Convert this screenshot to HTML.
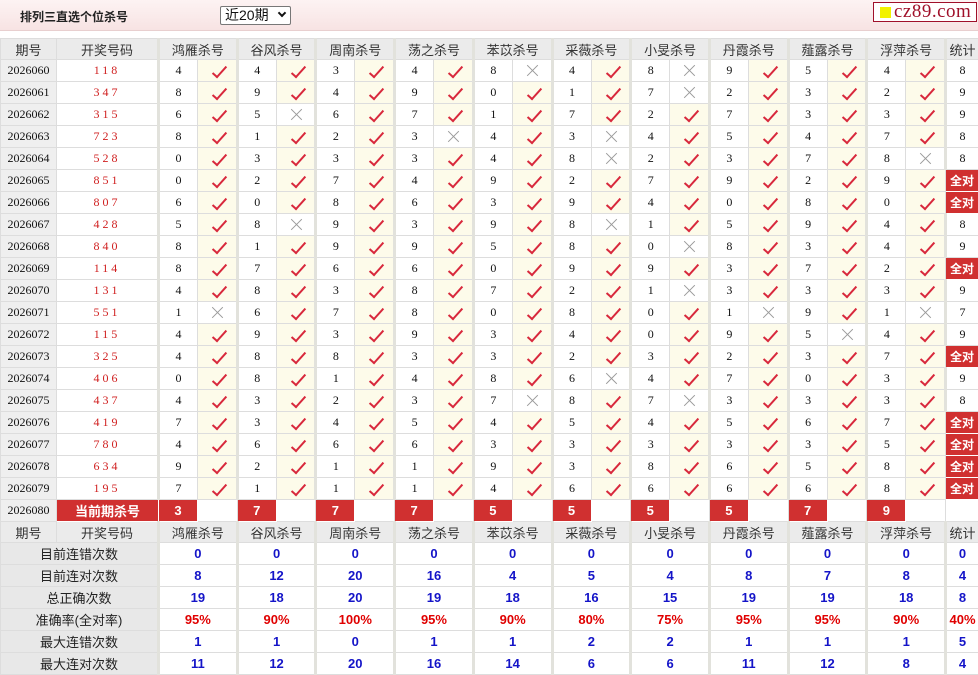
<!DOCTYPE html>
<html><head><meta charset="utf-8"><style>
*{box-sizing:border-box}
body{margin:0;width:978px;height:674px;background:#fff;position:relative;overflow:hidden;font-family:"Liberation Sans","Noto Sans CJK SC",sans-serif}
.bar{position:absolute;left:0;top:0;width:978px;height:31px;background:linear-gradient(#fdf3f3,#f7e3e3);border-bottom:1px solid #e8cfcf}
.title{position:absolute;left:20px;top:8px;font-size:12px;font-weight:bold;color:#222}
.sel{position:absolute;left:220px;top:6px;width:71px;height:19px;border:1px solid #777;border-radius:2px;background:#fff;font-size:14px;line-height:17px;padding-left:4px;color:#111}
.sel b{position:absolute;right:5px;top:3px;width:6px;height:6px;border-right:2px solid #111;border-bottom:2px solid #111;transform:rotate(45deg)}
.logo{position:absolute;left:873px;top:2px;width:104px;height:20px;border:1px solid #a0102a;background:#fff;font-family:"Liberation Serif",serif;font-size:19px;line-height:17px;color:#a0102a;padding-left:20px;letter-spacing:.5px}
.logo i{position:absolute;left:6px;top:4px;width:11px;height:11px;background:#f2f200}
table{position:absolute;left:0;top:38px;width:978px;border-collapse:collapse;table-layout:fixed}
td{border:1px solid #ddd;height:22px;padding:0;text-align:center;font:12px "Liberation Serif","Noto Serif CJK SC",serif;color:#111;position:relative}
tr.h td{background:#ebebeb;font:13px "Liberation Sans","Noto Sans CJK SC",sans-serif;color:#333;height:21px}
td.q{background:#efefef}
td.k{color:#d02020;letter-spacing:3px}
td.n{border-left:3px solid #e2e2dc}
td.v{background:#fdfbea}
td.v:after{content:"";position:absolute;left:18px;top:3px;width:5px;height:13px;border-right:2px solid #d8283c;border-bottom:2px solid #d8283c;transform:rotate(42deg)}
td.x:before,td.x:after{content:"";position:absolute;left:12px;top:10px;width:15px;height:1px;background:#999;transform:rotate(45deg)}
td.x:after{transform:rotate(-45deg)}
td.a{background:#d03030;color:#fff;font:bold 12px "Liberation Sans","Noto Sans CJK SC",sans-serif;border:1px solid #fff}
td.r{background:#d03030;color:#fff;font:bold 13px "Liberation Sans","Noto Sans CJK SC",sans-serif;border:1px solid #fff}
tr.s td{font:bold 13px "Liberation Sans",sans-serif;color:#1414c8}
tr.s td.l{background:#e8e8e8;font:13px "Liberation Sans","Noto Sans CJK SC",sans-serif;color:#222;font-weight:normal}
tr.p td{color:#e00000}
</style></head><body>
<div class="bar"><div class="title">排列三直选个位杀号</div><div class="sel">近20期<b></b></div><div class="logo"><i></i>cz89.com</div></div>
<table>
<colgroup><col style="width:56px"><col style="width:102px">
<col style="width:39px"><col style="width:39.7px"><col style="width:39px"><col style="width:39.7px"><col style="width:39px"><col style="width:39.7px"><col style="width:39px"><col style="width:39.7px"><col style="width:39px"><col style="width:39.7px"><col style="width:39px"><col style="width:39.7px"><col style="width:39px"><col style="width:39.7px"><col style="width:39px"><col style="width:39.7px"><col style="width:39px"><col style="width:39.7px"><col style="width:39px"><col style="width:39.7px">
<col style="width:33px"></colgroup>
<tr class="h"><td>期号</td><td>开奖号码</td><td colspan="2" class="n">鸿雁杀号</td><td colspan="2" class="n">谷风杀号</td><td colspan="2" class="n">周南杀号</td><td colspan="2" class="n">荡之杀号</td><td colspan="2" class="n">苯苡杀号</td><td colspan="2" class="n">采薇杀号</td><td colspan="2" class="n">小旻杀号</td><td colspan="2" class="n">丹霞杀号</td><td colspan="2" class="n">薤露杀号</td><td colspan="2" class="n">浮萍杀号</td><td class="n">统计</td></tr>
<tr><td class="q">2026060</td><td class="k">118</td><td class="n">4</td><td class="v"></td><td class="n">4</td><td class="v"></td><td class="n">3</td><td class="v"></td><td class="n">4</td><td class="v"></td><td class="n">8</td><td class="x"></td><td class="n">4</td><td class="v"></td><td class="n">8</td><td class="x"></td><td class="n">9</td><td class="v"></td><td class="n">5</td><td class="v"></td><td class="n">4</td><td class="v"></td><td class="n">8</td></tr>
<tr><td class="q">2026061</td><td class="k">347</td><td class="n">8</td><td class="v"></td><td class="n">9</td><td class="v"></td><td class="n">4</td><td class="v"></td><td class="n">9</td><td class="v"></td><td class="n">0</td><td class="v"></td><td class="n">1</td><td class="v"></td><td class="n">7</td><td class="x"></td><td class="n">2</td><td class="v"></td><td class="n">3</td><td class="v"></td><td class="n">2</td><td class="v"></td><td class="n">9</td></tr>
<tr><td class="q">2026062</td><td class="k">315</td><td class="n">6</td><td class="v"></td><td class="n">5</td><td class="x"></td><td class="n">6</td><td class="v"></td><td class="n">7</td><td class="v"></td><td class="n">1</td><td class="v"></td><td class="n">7</td><td class="v"></td><td class="n">2</td><td class="v"></td><td class="n">7</td><td class="v"></td><td class="n">3</td><td class="v"></td><td class="n">3</td><td class="v"></td><td class="n">9</td></tr>
<tr><td class="q">2026063</td><td class="k">723</td><td class="n">8</td><td class="v"></td><td class="n">1</td><td class="v"></td><td class="n">2</td><td class="v"></td><td class="n">3</td><td class="x"></td><td class="n">4</td><td class="v"></td><td class="n">3</td><td class="x"></td><td class="n">4</td><td class="v"></td><td class="n">5</td><td class="v"></td><td class="n">4</td><td class="v"></td><td class="n">7</td><td class="v"></td><td class="n">8</td></tr>
<tr><td class="q">2026064</td><td class="k">528</td><td class="n">0</td><td class="v"></td><td class="n">3</td><td class="v"></td><td class="n">3</td><td class="v"></td><td class="n">3</td><td class="v"></td><td class="n">4</td><td class="v"></td><td class="n">8</td><td class="x"></td><td class="n">2</td><td class="v"></td><td class="n">3</td><td class="v"></td><td class="n">7</td><td class="v"></td><td class="n">8</td><td class="x"></td><td class="n">8</td></tr>
<tr><td class="q">2026065</td><td class="k">851</td><td class="n">0</td><td class="v"></td><td class="n">2</td><td class="v"></td><td class="n">7</td><td class="v"></td><td class="n">4</td><td class="v"></td><td class="n">9</td><td class="v"></td><td class="n">2</td><td class="v"></td><td class="n">7</td><td class="v"></td><td class="n">9</td><td class="v"></td><td class="n">2</td><td class="v"></td><td class="n">9</td><td class="v"></td><td class="a">全对</td></tr>
<tr><td class="q">2026066</td><td class="k">807</td><td class="n">6</td><td class="v"></td><td class="n">0</td><td class="v"></td><td class="n">8</td><td class="v"></td><td class="n">6</td><td class="v"></td><td class="n">3</td><td class="v"></td><td class="n">9</td><td class="v"></td><td class="n">4</td><td class="v"></td><td class="n">0</td><td class="v"></td><td class="n">8</td><td class="v"></td><td class="n">0</td><td class="v"></td><td class="a">全对</td></tr>
<tr><td class="q">2026067</td><td class="k">428</td><td class="n">5</td><td class="v"></td><td class="n">8</td><td class="x"></td><td class="n">9</td><td class="v"></td><td class="n">3</td><td class="v"></td><td class="n">9</td><td class="v"></td><td class="n">8</td><td class="x"></td><td class="n">1</td><td class="v"></td><td class="n">5</td><td class="v"></td><td class="n">9</td><td class="v"></td><td class="n">4</td><td class="v"></td><td class="n">8</td></tr>
<tr><td class="q">2026068</td><td class="k">840</td><td class="n">8</td><td class="v"></td><td class="n">1</td><td class="v"></td><td class="n">9</td><td class="v"></td><td class="n">9</td><td class="v"></td><td class="n">5</td><td class="v"></td><td class="n">8</td><td class="v"></td><td class="n">0</td><td class="x"></td><td class="n">8</td><td class="v"></td><td class="n">3</td><td class="v"></td><td class="n">4</td><td class="v"></td><td class="n">9</td></tr>
<tr><td class="q">2026069</td><td class="k">114</td><td class="n">8</td><td class="v"></td><td class="n">7</td><td class="v"></td><td class="n">6</td><td class="v"></td><td class="n">6</td><td class="v"></td><td class="n">0</td><td class="v"></td><td class="n">9</td><td class="v"></td><td class="n">9</td><td class="v"></td><td class="n">3</td><td class="v"></td><td class="n">7</td><td class="v"></td><td class="n">2</td><td class="v"></td><td class="a">全对</td></tr>
<tr><td class="q">2026070</td><td class="k">131</td><td class="n">4</td><td class="v"></td><td class="n">8</td><td class="v"></td><td class="n">3</td><td class="v"></td><td class="n">8</td><td class="v"></td><td class="n">7</td><td class="v"></td><td class="n">2</td><td class="v"></td><td class="n">1</td><td class="x"></td><td class="n">3</td><td class="v"></td><td class="n">3</td><td class="v"></td><td class="n">3</td><td class="v"></td><td class="n">9</td></tr>
<tr><td class="q">2026071</td><td class="k">551</td><td class="n">1</td><td class="x"></td><td class="n">6</td><td class="v"></td><td class="n">7</td><td class="v"></td><td class="n">8</td><td class="v"></td><td class="n">0</td><td class="v"></td><td class="n">8</td><td class="v"></td><td class="n">0</td><td class="v"></td><td class="n">1</td><td class="x"></td><td class="n">9</td><td class="v"></td><td class="n">1</td><td class="x"></td><td class="n">7</td></tr>
<tr><td class="q">2026072</td><td class="k">115</td><td class="n">4</td><td class="v"></td><td class="n">9</td><td class="v"></td><td class="n">3</td><td class="v"></td><td class="n">9</td><td class="v"></td><td class="n">3</td><td class="v"></td><td class="n">4</td><td class="v"></td><td class="n">0</td><td class="v"></td><td class="n">9</td><td class="v"></td><td class="n">5</td><td class="x"></td><td class="n">4</td><td class="v"></td><td class="n">9</td></tr>
<tr><td class="q">2026073</td><td class="k">325</td><td class="n">4</td><td class="v"></td><td class="n">8</td><td class="v"></td><td class="n">8</td><td class="v"></td><td class="n">3</td><td class="v"></td><td class="n">3</td><td class="v"></td><td class="n">2</td><td class="v"></td><td class="n">3</td><td class="v"></td><td class="n">2</td><td class="v"></td><td class="n">3</td><td class="v"></td><td class="n">7</td><td class="v"></td><td class="a">全对</td></tr>
<tr><td class="q">2026074</td><td class="k">406</td><td class="n">0</td><td class="v"></td><td class="n">8</td><td class="v"></td><td class="n">1</td><td class="v"></td><td class="n">4</td><td class="v"></td><td class="n">8</td><td class="v"></td><td class="n">6</td><td class="x"></td><td class="n">4</td><td class="v"></td><td class="n">7</td><td class="v"></td><td class="n">0</td><td class="v"></td><td class="n">3</td><td class="v"></td><td class="n">9</td></tr>
<tr><td class="q">2026075</td><td class="k">437</td><td class="n">4</td><td class="v"></td><td class="n">3</td><td class="v"></td><td class="n">2</td><td class="v"></td><td class="n">3</td><td class="v"></td><td class="n">7</td><td class="x"></td><td class="n">8</td><td class="v"></td><td class="n">7</td><td class="x"></td><td class="n">3</td><td class="v"></td><td class="n">3</td><td class="v"></td><td class="n">3</td><td class="v"></td><td class="n">8</td></tr>
<tr><td class="q">2026076</td><td class="k">419</td><td class="n">7</td><td class="v"></td><td class="n">3</td><td class="v"></td><td class="n">4</td><td class="v"></td><td class="n">5</td><td class="v"></td><td class="n">4</td><td class="v"></td><td class="n">5</td><td class="v"></td><td class="n">4</td><td class="v"></td><td class="n">5</td><td class="v"></td><td class="n">6</td><td class="v"></td><td class="n">7</td><td class="v"></td><td class="a">全对</td></tr>
<tr><td class="q">2026077</td><td class="k">780</td><td class="n">4</td><td class="v"></td><td class="n">6</td><td class="v"></td><td class="n">6</td><td class="v"></td><td class="n">6</td><td class="v"></td><td class="n">3</td><td class="v"></td><td class="n">3</td><td class="v"></td><td class="n">3</td><td class="v"></td><td class="n">3</td><td class="v"></td><td class="n">3</td><td class="v"></td><td class="n">5</td><td class="v"></td><td class="a">全对</td></tr>
<tr><td class="q">2026078</td><td class="k">634</td><td class="n">9</td><td class="v"></td><td class="n">2</td><td class="v"></td><td class="n">1</td><td class="v"></td><td class="n">1</td><td class="v"></td><td class="n">9</td><td class="v"></td><td class="n">3</td><td class="v"></td><td class="n">8</td><td class="v"></td><td class="n">6</td><td class="v"></td><td class="n">5</td><td class="v"></td><td class="n">8</td><td class="v"></td><td class="a">全对</td></tr>
<tr><td class="q">2026079</td><td class="k">195</td><td class="n">7</td><td class="v"></td><td class="n">1</td><td class="v"></td><td class="n">1</td><td class="v"></td><td class="n">1</td><td class="v"></td><td class="n">4</td><td class="v"></td><td class="n">6</td><td class="v"></td><td class="n">6</td><td class="v"></td><td class="n">6</td><td class="v"></td><td class="n">6</td><td class="v"></td><td class="n">8</td><td class="v"></td><td class="a">全对</td></tr>
<tr><td class="q">2026080</td><td class="r">当前期杀号</td><td class="r">3</td><td></td><td class="r">7</td><td></td><td class="r">7</td><td></td><td class="r">7</td><td></td><td class="r">5</td><td></td><td class="r">5</td><td></td><td class="r">5</td><td></td><td class="r">5</td><td></td><td class="r">7</td><td></td><td class="r">9</td><td></td><td></td></tr>
<tr class="h"><td>期号</td><td>开奖号码</td><td colspan="2" class="n">鸿雁杀号</td><td colspan="2" class="n">谷风杀号</td><td colspan="2" class="n">周南杀号</td><td colspan="2" class="n">荡之杀号</td><td colspan="2" class="n">苯苡杀号</td><td colspan="2" class="n">采薇杀号</td><td colspan="2" class="n">小旻杀号</td><td colspan="2" class="n">丹霞杀号</td><td colspan="2" class="n">薤露杀号</td><td colspan="2" class="n">浮萍杀号</td><td class="n">统计</td></tr>
<tr class="s"><td colspan="2" class="l">目前连错次数</td><td colspan="2" class="n">0</td><td colspan="2" class="n">0</td><td colspan="2" class="n">0</td><td colspan="2" class="n">0</td><td colspan="2" class="n">0</td><td colspan="2" class="n">0</td><td colspan="2" class="n">0</td><td colspan="2" class="n">0</td><td colspan="2" class="n">0</td><td colspan="2" class="n">0</td><td class="n">0</td></tr>
<tr class="s"><td colspan="2" class="l">目前连对次数</td><td colspan="2" class="n">8</td><td colspan="2" class="n">12</td><td colspan="2" class="n">20</td><td colspan="2" class="n">16</td><td colspan="2" class="n">4</td><td colspan="2" class="n">5</td><td colspan="2" class="n">4</td><td colspan="2" class="n">8</td><td colspan="2" class="n">7</td><td colspan="2" class="n">8</td><td class="n">4</td></tr>
<tr class="s"><td colspan="2" class="l">总正确次数</td><td colspan="2" class="n">19</td><td colspan="2" class="n">18</td><td colspan="2" class="n">20</td><td colspan="2" class="n">19</td><td colspan="2" class="n">18</td><td colspan="2" class="n">16</td><td colspan="2" class="n">15</td><td colspan="2" class="n">19</td><td colspan="2" class="n">19</td><td colspan="2" class="n">18</td><td class="n">8</td></tr>
<tr class="s p"><td colspan="2" class="l">准确率(全对率)</td><td colspan="2" class="n">95%</td><td colspan="2" class="n">90%</td><td colspan="2" class="n">100%</td><td colspan="2" class="n">95%</td><td colspan="2" class="n">90%</td><td colspan="2" class="n">80%</td><td colspan="2" class="n">75%</td><td colspan="2" class="n">95%</td><td colspan="2" class="n">95%</td><td colspan="2" class="n">90%</td><td class="n">40%</td></tr>
<tr class="s"><td colspan="2" class="l">最大连错次数</td><td colspan="2" class="n">1</td><td colspan="2" class="n">1</td><td colspan="2" class="n">0</td><td colspan="2" class="n">1</td><td colspan="2" class="n">1</td><td colspan="2" class="n">2</td><td colspan="2" class="n">2</td><td colspan="2" class="n">1</td><td colspan="2" class="n">1</td><td colspan="2" class="n">1</td><td class="n">5</td></tr>
<tr class="s"><td colspan="2" class="l">最大连对次数</td><td colspan="2" class="n">11</td><td colspan="2" class="n">12</td><td colspan="2" class="n">20</td><td colspan="2" class="n">16</td><td colspan="2" class="n">14</td><td colspan="2" class="n">6</td><td colspan="2" class="n">6</td><td colspan="2" class="n">11</td><td colspan="2" class="n">12</td><td colspan="2" class="n">8</td><td class="n">4</td></tr>
</table>
</body></html>
